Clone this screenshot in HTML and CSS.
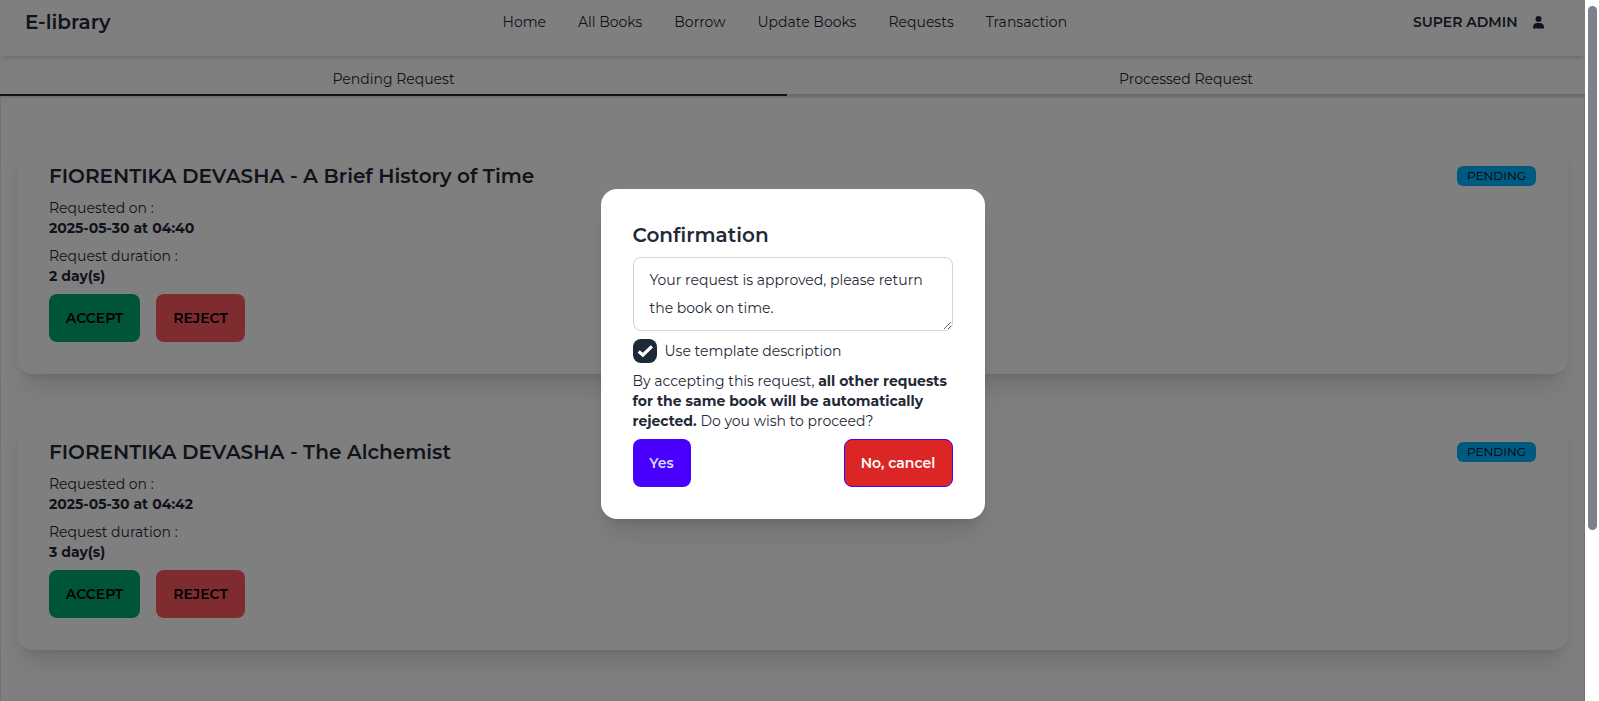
FILE: index.html
```html
<!DOCTYPE html>
<html lang="en">
<head>
<meta charset="utf-8">
<title>E-library</title>
<link rel="stylesheet" href="styles.css">
</head>
<body>
<div class="viewport">
  <div class="page">
    <header class="navbar">
      <a class="brand">E-library</a>
      <nav class="menu">
        <a>Home</a><a>All Books</a><a>Borrow</a><a>Update Books</a><a>Requests</a><a>Transaction</a>
      </nav>
      <div class="account">
        <span>SUPER ADMIN</span>
        <svg width="11" height="13" viewBox="0 0 11 13"><circle cx="5.5" cy="3.1" r="3"/><path d="M0 12.4v-1.2C0 8.6 1.9 7 4 7h3c2.100 0 4 1.600 4 4.200v1.200z"/></svg>
      </div>
    </header>
    <div class="tabs">
      <a class="tab tab-active">Pending Request</a>
      <a class="tab">Processed Request</a>
    </div>
    <main class="content">
      <article class="card">
        <div class="card-head"><h2>FIORENTIKA DEVASHA - A Brief History of Time</h2><span class="badge">PENDING</span></div>
        <div class="field"><p>Requested on :</p><p class="value">2025-05-30 at 04:40</p></div>
        <div class="field"><p>Request duration :</p><p class="value">2 day(s)</p></div>
        <div class="actions"><button class="btn accept">ACCEPT</button><button class="btn reject">REJECT</button></div>
      </article>
      <article class="card">
        <div class="card-head"><h2>FIORENTIKA DEVASHA - The Alchemist</h2><span class="badge">PENDING</span></div>
        <div class="field"><p>Requested on :</p><p class="value">2025-05-30 at 04:42</p></div>
        <div class="field"><p>Request duration :</p><p class="value">3 day(s)</p></div>
        <div class="actions"><button class="btn accept">ACCEPT</button><button class="btn reject">REJECT</button></div>
      </article>
    </main>
    <div class="overlay">
      <section class="modal">
        <h2>Confirmation</h2>
        <textarea class="message" spellcheck="false">Your request is approved, please return the book on time.</textarea>
        <div class="template">
          <span class="checkbox"><svg width="24" height="24" viewBox="0 0 24 24"><path d="M5.700 12.500l4.200 3.500 9-8.700" fill="none" stroke="#fff" stroke-width="3.200"/></svg></span>
          <span>Use template description</span>
        </div>
        <p class="notice">By accepting this request, <b>all other requests for the same book will be automatically rejected.</b> Do you wish to proceed?</p>
        <div class="modal-actions"><button class="btn yes">Yes</button><button class="btn cancel">No, cancel</button></div>
      </section>
    </div>
  </div>
  <div class="scrollbar"><div class="thumb"></div></div>
</div>
</body>
</html>
```

FILE: styles.css
```css
* { box-sizing: border-box; }
body { margin: 0; background: #fff; color: #1f2937; font: 400 14px/20px Montserrat, Inter, "Open Sans", sans-serif; overflow: hidden; }
h2, p { margin: 0; }
h2 { font-size: 20px; line-height: 28px; font-weight: 600; }
.viewport { display: flex; width: 1599px; height: 701px; overflow: hidden; }
.page { position: relative; width: 1585px; height: 701px; overflow: hidden; }

.navbar { display: grid; grid-template-columns: 502.500px 1fr auto; align-items: center; height: 56px; padding: 0 41px 12px 0; box-shadow: 0 4px 6px -1px rgba(0,0,0,.1), 0 2px 4px -2px rgba(0,0,0,.1); }
.brand { padding-left: 25px; font-size: 20px; line-height: 28px; font-weight: 600; }
.menu { display: flex; gap: 32px; white-space: nowrap; }
.account { display: flex; align-items: center; gap: 15.500px; font-weight: 600; }
.account svg { fill: #1f2937; }

.tabs { display: grid; grid-template-columns: 787px 1fr; height: 40px; padding-top: 8px; }
.tab { display: flex; align-items: center; justify-content: center; height: 32px; border-bottom: 2px solid #d2d4d7; }
.tab-active { border-color: #1f2937; }

.content { display: flex; flex-direction: column; gap: 32px; height: 613px; padding: 32px 16px; border: 1px solid #e5e6e6; border-top-width: 2px; }
.card { display: flex; flex-direction: column; gap: 8px; flex: none; height: 244px; padding: 32px; border-radius: 16px; background: #fff; box-shadow: 0 20px 25px -5px rgba(0,0,0,.1), 0 8px 10px -6px rgba(0,0,0,.1); }
.card-head { display: flex; align-items: center; justify-content: space-between; }
.badge { width: 79px; height: 20px; border-radius: 6px; background: #00b5ff; color: #000; font-size: 12px; line-height: 20px; text-align: center; }
.value { font-weight: 700; }
.actions { display: flex; gap: 16px; }
.btn { height: 48px; padding: 0; border: 0; border-radius: 8px; font: inherit; font-weight: 600; white-space: nowrap; }
.accept { width: 91px; background: #00a96e; }
.reject { width: 89px; background: #ff5861; }

.overlay { position: absolute; inset: 0; display: flex; align-items: center; justify-content: center; padding-top: 7px; background: rgba(0,0,0,.5); }
.modal { display: flex; flex-direction: column; gap: 8px; width: 384px; height: 330px; padding: 32px; border-radius: 16px; background: #fff; box-shadow: 0 20px 25px -5px rgba(0,0,0,.1), 0 8px 10px -6px rgba(0,0,0,.1); }
.message { display: block; width: 320px; height: 74px; margin: 0; padding: 8px 16px; border: 1px solid #d2d4d7; border-radius: 8px; color: #1f2937; background: #fff; font: inherit; line-height: 28px; overflow: hidden; resize: vertical; outline: 0; }
.template { display: flex; align-items: center; gap: 8px; }
.checkbox { display: block; width: 24px; height: 24px; border-radius: 8px; background: #1f2937; }
.checkbox svg { display: block; }
.notice { height: 60px; }
.notice b { font-weight: 700; }
.modal-actions { display: flex; justify-content: space-between; }
.yes { width: 58px; background: #4a00ff; color: #d1dbff; }
.cancel { width: 109px; border: 1px solid #4a00ff; background: #dc2626; color: #fff; }

.scrollbar { width: 14px; height: 701px; padding: 6px 2px 0 3px; background: #fff; }
.thumb { height: 524px; border-radius: 5px; background: #7b828b; }
```
